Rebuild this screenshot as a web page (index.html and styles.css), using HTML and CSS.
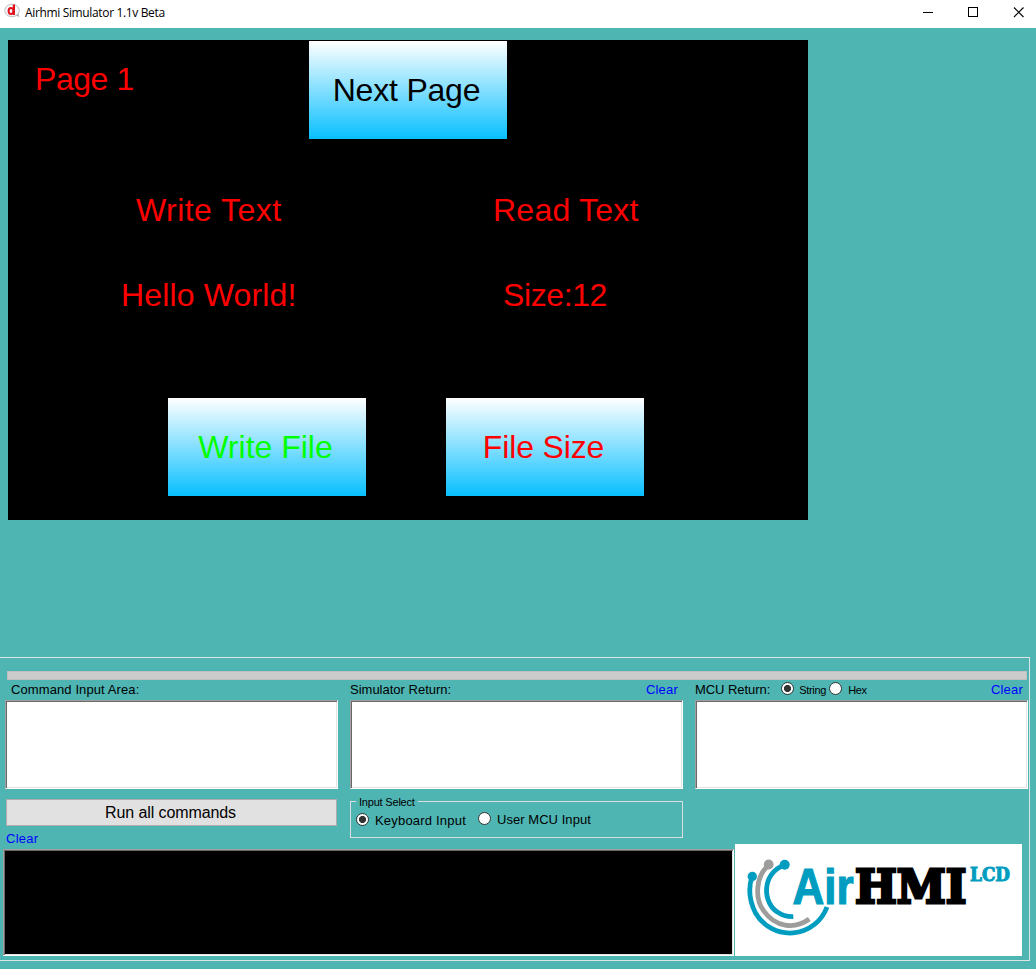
FILE: index.html
```html
<!DOCTYPE html>
<html lang="en">
<head>
<meta charset="utf-8">
<title>Airhmi Simulator</title>
<link rel="stylesheet" href="styles.css">
</head>
<body>
<header class="titlebar">
  <svg class="app-icon" width="17" height="17" viewBox="0 0 17 17"><ellipse cx="8" cy="7.500" rx="7.300" ry="6.300" fill="#f6f6f8" stroke="#c0c0c6"/><path d="M11 12.500l4.500 1.500L14.500 10.500" fill="#b5b5bb"/><ellipse cx="7" cy="8" rx="2.400" ry="2.900" fill="none" stroke="#e0131c" stroke-width="2"/><path d="M9.900 1.500v10.500" stroke="#e0131c" stroke-width="2.200"/></svg>
  <span class="caption">Airhmi Simulator 1.1v Beta</span>
  <svg class="window-buttons" width="113" height="28" viewBox="0 0 113 28" fill="none" stroke="#000"><path d="M0 12.500h10M45.500 7.500h9v9h-9z" shape-rendering="crispEdges"/><path d="M91 7.500l9.500 9.500M100.500 7.500l-9.500 9.500" stroke-width="1.100"/></svg>
</header>

<main class="lcd">
  <span class="lcd-text page">Page 1</span>
  <button class="lcd-button next"><span>Next Page</span></button>
  <span class="lcd-text write">Write Text</span>
  <span class="lcd-text read">Read Text</span>
  <span class="lcd-text hello">Hello World!</span>
  <span class="lcd-text size">Size:12</span>
  <button class="lcd-button write-file"><span>Write File</span></button>
  <button class="lcd-button file-size"><span>File Size</span></button>
</main>

<section class="panel">
  <div class="progress"></div>
  <div class="columns">
    <div class="column">
      <div class="labels"><span class="command-label">Command Input Area:</span></div>
      <div class="box"></div>
    </div>
    <div class="column">
      <div class="labels"><span class="simulator-label">Simulator Return:</span><a class="clear">Clear</a></div>
      <div class="box"></div>
    </div>
    <div class="column">
      <div class="labels"><span class="mcu-label">MCU Return:</span><i class="radio checked"></i><span class="string">String</span><i class="radio"></i><span class="hex">Hex</span><a class="clear">Clear</a></div>
      <div class="box"></div>
    </div>
  </div>
  <div class="lower">
    <div class="controls">
      <div class="actions">
        <div class="run-group">
          <button class="run"><span>Run all commands</span></button>
          <a class="clear-log">Clear</a>
        </div>
        <fieldset class="input-select">
          <legend>Input Select</legend>
          <div class="options"><label class="keyboard"><i class="radio checked"></i><span>Keyboard Input</span></label><label class="user"><i class="radio"></i><span>User MCU Input</span></label></div>
        </fieldset>
      </div>
      <div class="box log"></div>
    </div>
    <svg class="logo" width="287" height="112" viewBox="0 0 287 112">
      <g fill="none" stroke-width="4.800">
        <path d="M17.300 32C13 44 14.500 57 20.500 69A39.500 39.500 0 0 0 92 63" stroke="#009dc0"/>
        <path d="M33.700 21C20 33 20 55 28.500 66.500C40 83 59 86 74.300 75" stroke="#9d9d9c"/>
        <path d="M49.700 21C26 29 27 60 44 69Q50 73 58.300 72.700" stroke="#009dc0"/>
      </g>
      <circle cx="17.300" cy="32.500" r="4.700" fill="#009dc0"/>
      <circle cx="33.700" cy="20.500" r="4.900" fill="#9d9d9c"/>
      <circle cx="49.700" cy="20.700" r="5" fill="#009dc0"/>
      <text class="logo-air" x="57.500" y="59.500" textLength="61" lengthAdjust="spacingAndGlyphs">Air</text>
      <text class="logo-hmi" x="120" y="59" textLength="111.500" lengthAdjust="spacingAndGlyphs">HMI</text>
      <text class="logo-lcd" x="235" y="36.500" textLength="40" lengthAdjust="spacingAndGlyphs">LCD</text>
    </svg>
  </div>
</section>
</body>
</html>
```
FILE: styles.css
```css
* { box-sizing: border-box; }
body {
  margin: 0;
  height: 969px;
  overflow: hidden;
  background: #4eb5b3;
  color: #000;
  font: 13px/16px "Liberation Sans", Arial, sans-serif;
  white-space: nowrap;
}
button { padding: 0; font-family: inherit; }
.titlebar { display: flex; height: 28px; background: #fff; }
.app-icon { margin: 3px 0 0 4px; }
.caption { margin: 5px 0 0 4px; font: 12px/16px "Open Sans", sans-serif; letter-spacing: -.35px; }
.window-buttons { margin-left: auto; }

/* Simulated display: widgets sit at free canvas positions */
.lcd { position: relative; width: 800px; height: 480px; margin: 12px 0 0 8px; background: #000; }
.lcd-text { position: absolute; color: #f00; font-size: 32px; line-height: 36px; }
.page { left: 27px; top: 21px; letter-spacing: -.45px; }
.write { left: 128px; top: 152px; letter-spacing: .45px; }
.read { left: 485px; top: 152px; letter-spacing: .25px; }
.hello { left: 113px; top: 237px; letter-spacing: .15px; }
.size { left: 495px; top: 237px; letter-spacing: -.4px; }
.lcd-button {
  position: absolute;
  width: 198px;
  height: 98px;
  border: 0;
  background: linear-gradient(#fff, #08bfff);
  font-size: 32px;
  line-height: 36px;
}
.next { left: 301px; top: 1px; padding-right: 3px; color: #000; letter-spacing: -.2px; }
.write-file { left: 160px; top: 358px; padding-right: 3px; color: #0f0; }
.file-size { left: 438px; top: 358px; padding-right: 3px; color: #f00; letter-spacing: -.15px; }

.panel {
  width: 1030px;
  height: 304px;
  margin-top: 137px;
  padding-top: 13px;
  border: 1px solid #dce5e5;
  border-left: 0;
}
.progress { width: 1020px; height: 9px; margin-left: 7px; background: #ccc; border: 1px solid #bfbfbf; }
.columns { display: flex; gap: 12px; padding-left: 5px; }
.column { width: 333px; }
.labels { display: flex; align-items: center; height: 20px; }
.box {
  height: 89px;
  background: #fff;
  border: 1px solid;
  border-color: #a0a0a0 #fff #fff #a0a0a0;
  box-shadow: inset 1px 1px #696969, inset -1px -1px #e3e3e3;
}
.command-label { margin-left: 6px; letter-spacing: .1px; }
.mcu-label { letter-spacing: -.05px; }
.clear { margin: 0 5px 0 auto; color: #00f; letter-spacing: .2px; }
.radio {
  width: 13px;
  height: 13px;
  flex: none;
  border: 1px solid #333;
  border-radius: 50%;
  background: #fff;
}
.radio.checked { background: radial-gradient(circle, #333 3.2px, #fff 3.900px); }
.labels .radio { margin-top: -3px; }
.mcu-label + .radio { margin-left: 11px; }
.string { width: 29px; margin: -1px 0 0 5px; font-size: 11px; letter-spacing: -.35px; }
.string + .radio { margin-left: 1px; }
.hex { margin: -1px 0 0 6px; font-size: 11px; letter-spacing: -.4px; }
.lower { display: flex; gap: 1px; padding-left: 3px; }
.controls { width: 731px; }
.actions { display: flex; height: 60px; }
.run-group { display: flex; flex-direction: column; width: 347px; padding: 10px 0 0 3px; }
.run { width: 331px; height: 27px; padding-right: 2px; border: 1px solid #adadad; background: #e1e1e1; font-size: 16px; color: #000; letter-spacing: -.1px; }
.clear-log { margin: 5px 0 0; color: #00f; letter-spacing: .25px; }
.input-select { width: 333px; height: 43px; margin: 6px 0 0; padding: 0 0 0 5px; border: 1px solid #dcdcdc; }
.input-select legend { height: 12px; margin-left: 0; padding: 1px 3px 0; font-size: 11px; line-height: 13px; letter-spacing: -.2px; }
.options { display: flex; }
.options label { display: flex; gap: 6px; letter-spacing: .2px; }
.keyboard { margin-top: 6px; }
.options .user { margin: 5px 0 0 12px; letter-spacing: .05px; }
.log { height: 107px; background: #000; }
.logo { margin-top: 55px; background: #fff; }
.logo-air { font: bold 50px "Liberation Sans", Arial, sans-serif; fill: #009dc0; stroke: #009dc0; stroke-width: 1.2px; }
.logo-hmi { font: bold 47px "DejaVu Serif", serif; fill: #000; stroke: #000; stroke-width: 3px; }
.logo-lcd { font: bold 18px "DejaVu Serif", serif; fill: #009dc0; stroke: #009dc0; stroke-width: 1px; }
```
